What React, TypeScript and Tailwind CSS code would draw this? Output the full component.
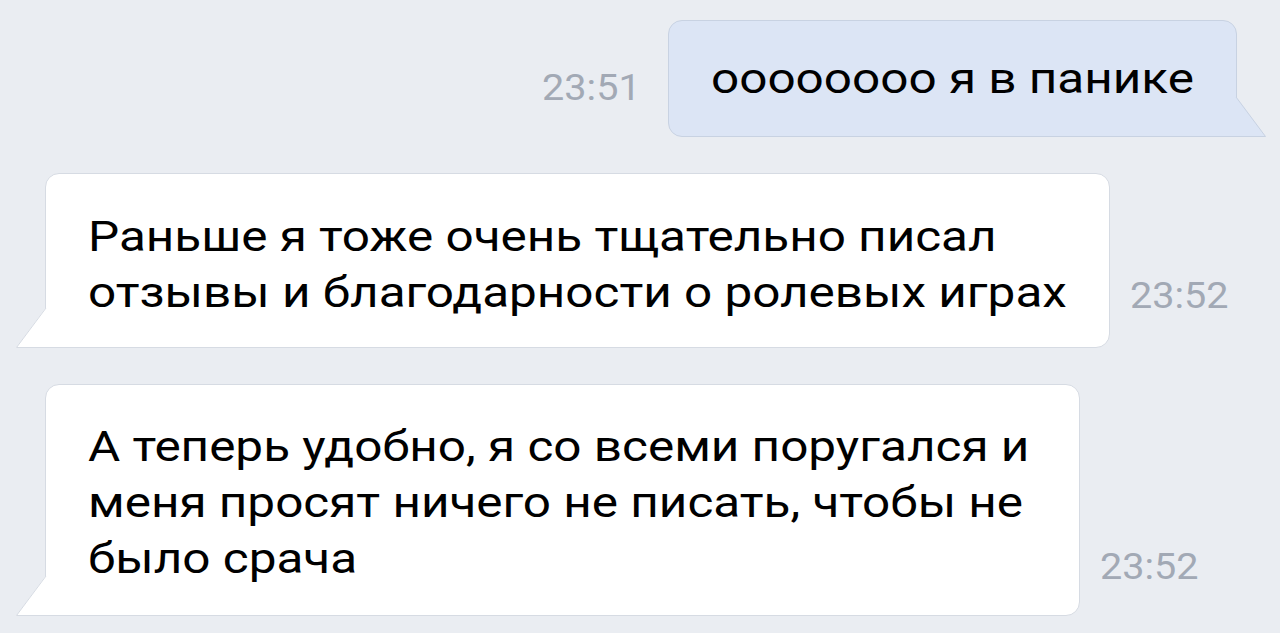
import React from "react";

type Msg = {
  id: number;
  out: boolean;
  lines: string[];
  time: string;
  width: string;
  pad: string;
  timeGap: string;
};

const messages: Msg[] = [
  {
    id: 1,
    out: true,
    lines: ["оооооооо я в панике"],
    time: "23:51",
    width: "w-[569px]",
    pad: "pt-[29px] pb-[30px]",
    timeGap: "mb-[31px]",
  },
  {
    id: 2,
    out: false,
    lines: [
      "Раньше я тоже очень тщательно писал",
      "отзывы и благодарности о ролевых играх",
    ],
    time: "23:52",
    width: "w-[1065px]",
    pad: "pt-[34px] pb-[27px]",
    timeGap: "mb-[34px]",
  },
  {
    id: 3,
    out: false,
    lines: [
      "А теперь удобно, я со всеми поругался и",
      "меня просят ничего не писать, чтобы не",
      "было срача",
    ],
    time: "23:52",
    width: "w-[1035px]",
    pad: "pt-[33px] pb-[29px]",
    timeGap: "mb-[31px]",
  },
];

function Tail({ out }: { out: boolean }) {
  // little triangle that sticks out of the bottom corner
  if (out) {
    return (
      <svg
        className="absolute right-[-31px] bottom-[-1px]"
        width="32"
        height="40"
        viewBox="0 0 32 40"
      >
        <polygon points="0,0 1.5,0 31,40 0,40" fill="#dce5f5" />
        <polyline
          points="1,0 30.5,39.5 0,39.5"
          fill="none"
          stroke="#c8d2e2"
          strokeWidth="1"
        />
      </svg>
    );
  }
  return (
    <svg
      className="absolute left-[-31px] bottom-[-1px]"
      width="32"
      height="40"
      viewBox="0 0 32 40"
    >
      <polygon points="32,0 30.5,0 1,40 32,40" fill="#ffffff" />
      <polyline
        points="31,0 1.5,39.5 32,39.5"
        fill="none"
        stroke="#d6dbe3"
        strokeWidth="1"
      />
    </svg>
  );
}

function Time({ value, className }: { value: string; className: string }) {
  return (
    <span
      className={`text-[36px] leading-none text-[#a2a9b5] whitespace-nowrap scale-x-[1.1] ${className}`}
    >
      {value}
    </span>
  );
}

export default function App() {
  return (
    <div
      className="h-[633px] w-[1280px] overflow-hidden bg-[#eaedf2] text-black"
      style={{ fontFamily: "Roboto, 'Noto Sans', sans-serif" }}
    >
      <div className="flex flex-col gap-[36px] pt-[20px]">
        {messages.map((m) => (
          <div
            key={m.id}
            className={`flex items-end ${
              m.out ? "justify-end pr-[43px] gap-[27px]" : "pl-[45px] gap-[20px]"
            }`}
          >
            {m.out && <Time value={m.time} className={`origin-right ${m.timeGap}`} />}
            <div
              className={`relative ${m.width} ${m.pad} px-[42px] border rounded-[14px] ${
                m.out
                  ? "bg-[#dce5f5] border-[#c8d2e2] rounded-br-none"
                  : "bg-white border-[#d6dbe3] rounded-bl-none"
              }`}
            >
              <div className="text-[43px] leading-[56px] whitespace-nowrap origin-left scale-x-[1.15]">
                {m.lines.map((line, i) => (
                  <div key={i}>{line}</div>
                ))}
              </div>
              <Tail out={m.out} />
            </div>
            {!m.out && <Time value={m.time} className={`origin-left ${m.timeGap}`} />}
          </div>
        ))}
      </div>
    </div>
  );
}
